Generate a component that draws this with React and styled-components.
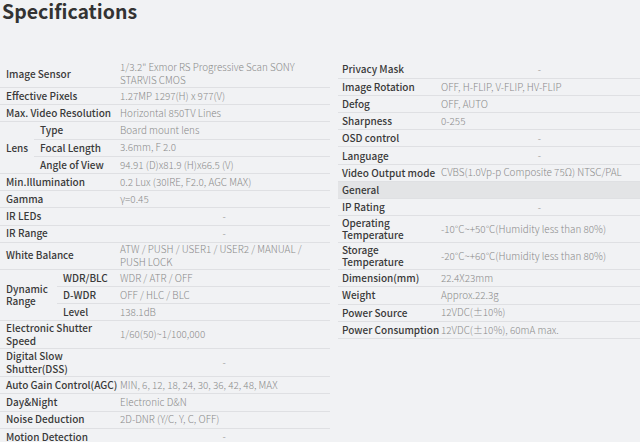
import React from 'react';
import styled, { createGlobalStyle } from 'styled-components';

const GlobalStyle = createGlobalStyle`
  html, body {
    margin: 0;
    padding: 0;
    background: #f1f2f4;
  }
  body {
    font-family: "Noto Sans CJK SC", "Noto Sans", sans-serif;
    color: #3a3a3a;
  }
`;

const Page = styled.div`
  width: 640px;
  height: 442px;
  overflow: hidden;
`;

const Title = styled.h2`
  margin: 0;
  padding: 0 0 0 2px;
  font-size: 19.5px;
  line-height: 22px;
  font-weight: 700;
  color: #333;
`;

const Columns = styled.div`
  display: grid;
  grid-template-columns: 330px 302px;
  column-gap: 8px;
  align-items: start;
  margin-top: 39px;
`;

const Table = styled.table`
  width: 100%;
  border-collapse: collapse;
  table-layout: fixed;
`;

const Row = styled.tr`
  height: 17.2px;
  border-bottom: 1px solid #dfe0e3;
  background: ${(p) => (p.$head ? '#e3e4e6' : 'transparent')};
`;

const Label = styled.td`
  padding: 1px 0 1px ${(p) => p.$pad || 6}px;
  font-size: 10px;
  line-height: ${(p) => p.$lh || 12}px;
  font-weight: 500;
  color: #3a3a3a;
  white-space: nowrap;
  vertical-align: middle;
`;

const Value = styled.td`
  padding: 0 2px 0 ${(p) => p.$pad || 3}px;
  font-size: 9.9px;
  line-height: ${(p) => p.$lh || 12.5}px;
  font-weight: 300;
  color: #8a8a8a;
  white-space: nowrap;
  vertical-align: middle;
  text-align: ${(p) => (p.$center ? 'center' : 'left')};
`;

const Sub = styled.span`
  display: block;
`;

const lines = (text) =>
  text.split('\n').map((t, i) => <Sub key={i}>{t}</Sub>);

const left = [
  ['Image Sensor', '1/3.2" Exmor RS Progressive Scan SONY\nSTARVIS CMOS'],
  ['Effective Pixels', '1.27MP 1297(H) x 977(V)'],
  ['Max. Video Resolution', 'Horizontal 850TV Lines'],
  { group: 'Lens', rows: [['Type', 'Board mount lens'], ['Focal Length', '3.6mm, F 2.0'], ['Angle of View', '94.91 (D)x81.9 (H)x66.5 (V)']] },
  ['Min.Illumination', '0.2 Lux (30IRE, F2.0, AGC MAX)'],
  ['Gamma', 'γ=0.45'],
  ['IR LEDs', '-'],
  ['IR Range', '-'],
  ['White Balance', 'ATW / PUSH / USER1 / USER2 / MANUAL /\nPUSH LOCK'],
  { group: 'Dynamic\nRange', rows: [['WDR/BLC', 'WDR / ATR / OFF'], ['D-WDR', 'OFF / HLC / BLC'], ['Level', '138.1dB']] },
  ['Electronic Shutter\nSpeed', '1/60(50)~1/100,000'],
  ['Digital Slow\nShutter(DSS)', '-'],
  ['Auto Gain Control(AGC)', 'MIN, 6, 12, 18, 24, 30, 36, 42, 48, MAX'],
  ['Day&Night', 'Electronic D&N'],
  ['Noise Deduction', '2D-DNR (Y/C, Y, C, OFF)'],
  ['Motion Detection', '-'],
];

const right = [
  ['Privacy Mask', '-'],
  ['Image Rotation', 'OFF, H-FLIP, V-FLIP, HV-FLIP'],
  ['Defog', 'OFF, AUTO'],
  ['Sharpness', '0-255'],
  ['OSD control', '-'],
  ['Language', '-'],
  ['Video Output mode', 'CVBS(1.0Vp-p Composite 75Ω) NTSC/PAL'],
  { head: 'General' },
  ['IP Rating', '-'],
  ['Operating\nTemperature', '-10°C~+50°C(Humidity less than 80%)'],
  ['Storage\nTemperature', '-20°C~+60°C(Humidity less than 80%)'],
  ['Dimension(mm)', '22.4X23mm'],
  ['Weight', 'Approx.22.3g'],
  ['Power Source', '12VDC(±10%)'],
  ['Power Consumption', '12VDC(±10%), 60mA max.'],
];

const ValueCell = ({ text, pad, lh }) => (
  <Value $center={text === '-'} $pad={pad} $lh={lh}>{lines(text)}</Value>
);

function LeftTable() {
  const out = [];
  left.forEach((item, i) => {
    if (Array.isArray(item)) {
      out.push(
        <Row key={i}>
          <Label colSpan={3} $lh={12.5}>{lines(item[0])}</Label>
          <ValueCell text={item[1]} lh={13} />
        </Row>
      );
    } else {
      const lens = item.group === 'Lens';
      item.rows.forEach((r, j) => {
        out.push(
          <Row key={`${i}-${j}`}>
            {j === 0 && (
              <Label rowSpan={item.rows.length} colSpan={lens ? 1 : 2}>
                {lines(item.group)}
              </Label>
            )}
            <Label colSpan={lens ? 2 : 1}>{r[0]}</Label>
            <ValueCell text={r[1]} />
          </Row>
        );
      });
    }
  });
  return (
    <Table>
      <colgroup>
        <col style={{ width: 34 }} />
        <col style={{ width: 23 }} />
        <col style={{ width: 60 }} />
        <col style={{ width: 213 }} />
      </colgroup>
      <tbody>{out}</tbody>
    </Table>
  );
}

function RightTable() {
  return (
    <Table>
      <colgroup>
        <col style={{ width: 98 }} />
        <col style={{ width: 204 }} />
      </colgroup>
      <tbody>
        {right.map((item, i) =>
          item.head ? (
            <Row key={i} $head>
              <Label colSpan={2} $pad={4}>{item.head}</Label>
            </Row>
          ) : (
            <Row key={i}>
              <Label $pad={4}>{lines(item[0])}</Label>
              <ValueCell text={item[1]} pad={5} />
            </Row>
          )
        )}
      </tbody>
    </Table>
  );
}

export default function App() {
  return (
    <Page>
      <GlobalStyle />
      <Title>Specifications</Title>
      <Columns>
        <LeftTable />
        <RightTable />
      </Columns>
    </Page>
  );
}
